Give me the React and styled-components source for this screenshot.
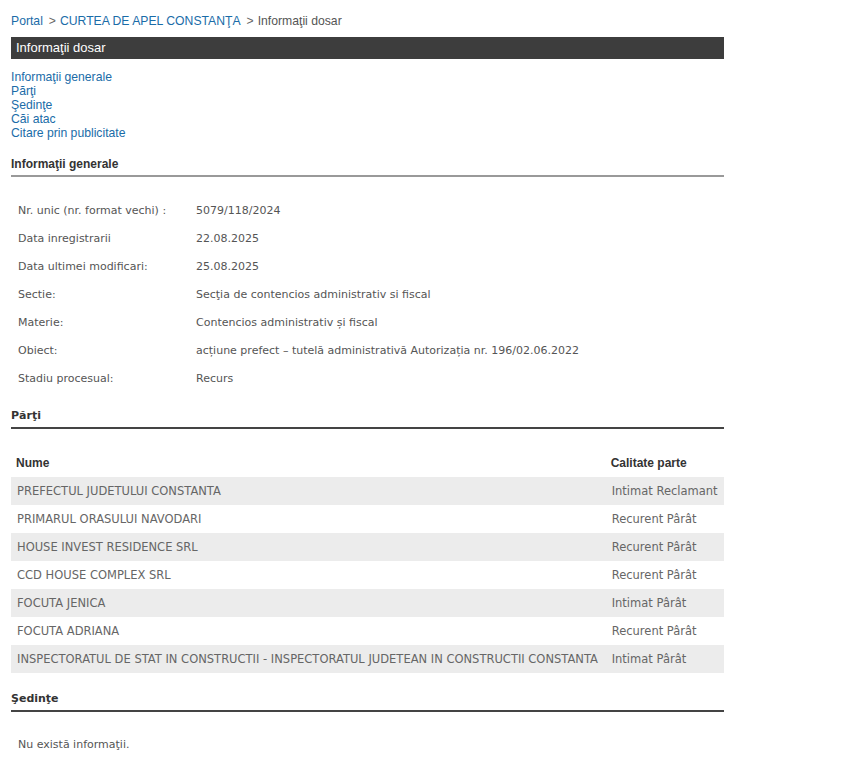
import React from "react";
import styled, { createGlobalStyle } from "styled-components";

const Global = createGlobalStyle`
  body {
    margin: 0;
    background: #fff;
    font-family: "Liberation Sans", Arial, sans-serif;
  }
`;

const Page = styled.div`
  width: 713px;
  padding: 12px 0 20px 11px;
`;

const Crumbs = styled.div`
  font-size: 12.2px;
  line-height: 18px;
  color: #555;
`;

const CrumbLink = styled.a`
  color: #1a6ca8;
  text-decoration: none;
`;

const Sep = styled.span`
  margin: 0 4px 0 6px;
  color: #666;
`;

const TitleBar = styled.div`
  margin-top: 7px;
  height: 22px;
  line-height: 22px;
  background: #3d3d3d;
  color: #fff;
  font-size: 13px;
  padding-left: 5px;
`;

const Nav = styled.div`
  margin-top: 11px;
  display: flex;
  flex-direction: column;
`;

const NavLink = styled.a`
  font-size: 12.2px;
  line-height: 14px;
  color: #1a6ca8;
  text-decoration: none;
`;

const SectionTitle = styled.div`
  margin-top: ${p => p.top}px;
  font-family: ${p => (p.tahoma ? '"DejaVu Sans", Verdana, sans-serif' : '"Liberation Sans", Arial, sans-serif')};
  font-size: ${p => (p.tahoma ? "11px" : "12px")};
  font-weight: bold;
  color: #333;
  line-height: 16px;
  padding-bottom: 3px;
  border-bottom: 2px solid ${p => p.line};
`;

const InfoList = styled.div`
  margin-top: 19px;
  padding-left: 7px;
`;

const InfoRow = styled.div`
  display: grid;
  grid-template-columns: 178px 1fr;
  height: 28px;
  align-items: center;
  font-family: "DejaVu Sans", Verdana, sans-serif;
  font-size: 11px;
  color: #555;
`;

const Table = styled.table`
  width: 100%;
  margin-top: 20px;
  border-collapse: collapse;
  font-family: "DejaVu Sans", Verdana, sans-serif;
  font-size: 11.5px;
`;

const Th = styled.th`
  text-align: left;
  font-family: "Liberation Sans", Arial, sans-serif;
  font-size: 12px;
  font-weight: bold;
  color: #333;
  height: 28px;
  padding: 0 5px;
  vertical-align: middle;
`;

const Tr = styled.tr`
  background: ${p => (p.odd ? "#ececec" : "#fff")};
`;

const Td = styled.td`
  height: 28px;
  padding: 0 6px;
  color: #666;
  white-space: nowrap;
`;

const Empty = styled.div`
  margin-top: 26px;
  padding-left: 7px;
  font-family: "DejaVu Sans", Verdana, sans-serif;
  font-size: 11px;
  color: #555;
`;

const info = [
  ["Nr. unic (nr. format vechi) :", "5079/118/2024"],
  ["Data inregistrarii", "22.08.2025"],
  ["Data ultimei modificari:", "25.08.2025"],
  ["Sectie:", "Secţia de contencios administrativ si fiscal"],
  ["Materie:", "Contencios administrativ și fiscal"],
  ["Obiect:", "acțiune prefect – tutelă administrativă Autorizația nr. 196/02.06.2022"],
  ["Stadiu procesual:", "Recurs"]
];

const parti = [
  ["PREFECTUL JUDETULUI CONSTANTA", "Intimat Reclamant"],
  ["PRIMARUL ORASULUI NAVODARI", "Recurent Pârât"],
  ["HOUSE INVEST RESIDENCE SRL", "Recurent Pârât"],
  ["CCD HOUSE COMPLEX SRL", "Recurent Pârât"],
  ["FOCUTA JENICA", "Intimat Pârât"],
  ["FOCUTA ADRIANA", "Recurent Pârât"],
  ["INSPECTORATUL DE STAT IN CONSTRUCTII - INSPECTORATUL JUDETEAN IN CONSTRUCTII CONSTANTA", "Intimat Pârât"]
];

export default function App() {
  return (
    <Page>
      <Global />
      <Crumbs>
        <CrumbLink href="#">Portal</CrumbLink>
        <Sep>&gt;</Sep>
        <CrumbLink href="#">CURTEA DE APEL CONSTANŢA</CrumbLink>
        <Sep>&gt;</Sep>
        Informaţii dosar
      </Crumbs>
      <TitleBar>Informaţii dosar</TitleBar>
      <Nav>
        <NavLink href="#">Informaţii generale</NavLink>
        <NavLink href="#">Părţi</NavLink>
        <NavLink href="#">Şedinţe</NavLink>
        <NavLink href="#">Căi atac</NavLink>
        <NavLink href="#">Citare prin publicitate</NavLink>
      </Nav>

      <SectionTitle top={16} line="#999">Informaţii generale</SectionTitle>
      <InfoList>
        {info.map(([k, v]) => (
          <InfoRow key={k}>
            <span>{k}</span>
            <span>{v}</span>
          </InfoRow>
        ))}
      </InfoList>

      <SectionTitle top={16} line="#444" tahoma>Părţi</SectionTitle>
      <Table>
        <thead>
          <tr>
            <Th>Nume</Th>
            <Th>Calitate parte</Th>
          </tr>
        </thead>
        <tbody>
          {parti.map(([n, c], i) => (
            <Tr key={n} odd={i % 2 === 0}>
              <Td>{n}</Td>
              <Td>{c}</Td>
            </Tr>
          ))}
        </tbody>
      </Table>

      <SectionTitle top={18} line="#444" tahoma>Şedinţe</SectionTitle>
      <Empty>Nu există informaţii.</Empty>
    </Page>
  );
}
